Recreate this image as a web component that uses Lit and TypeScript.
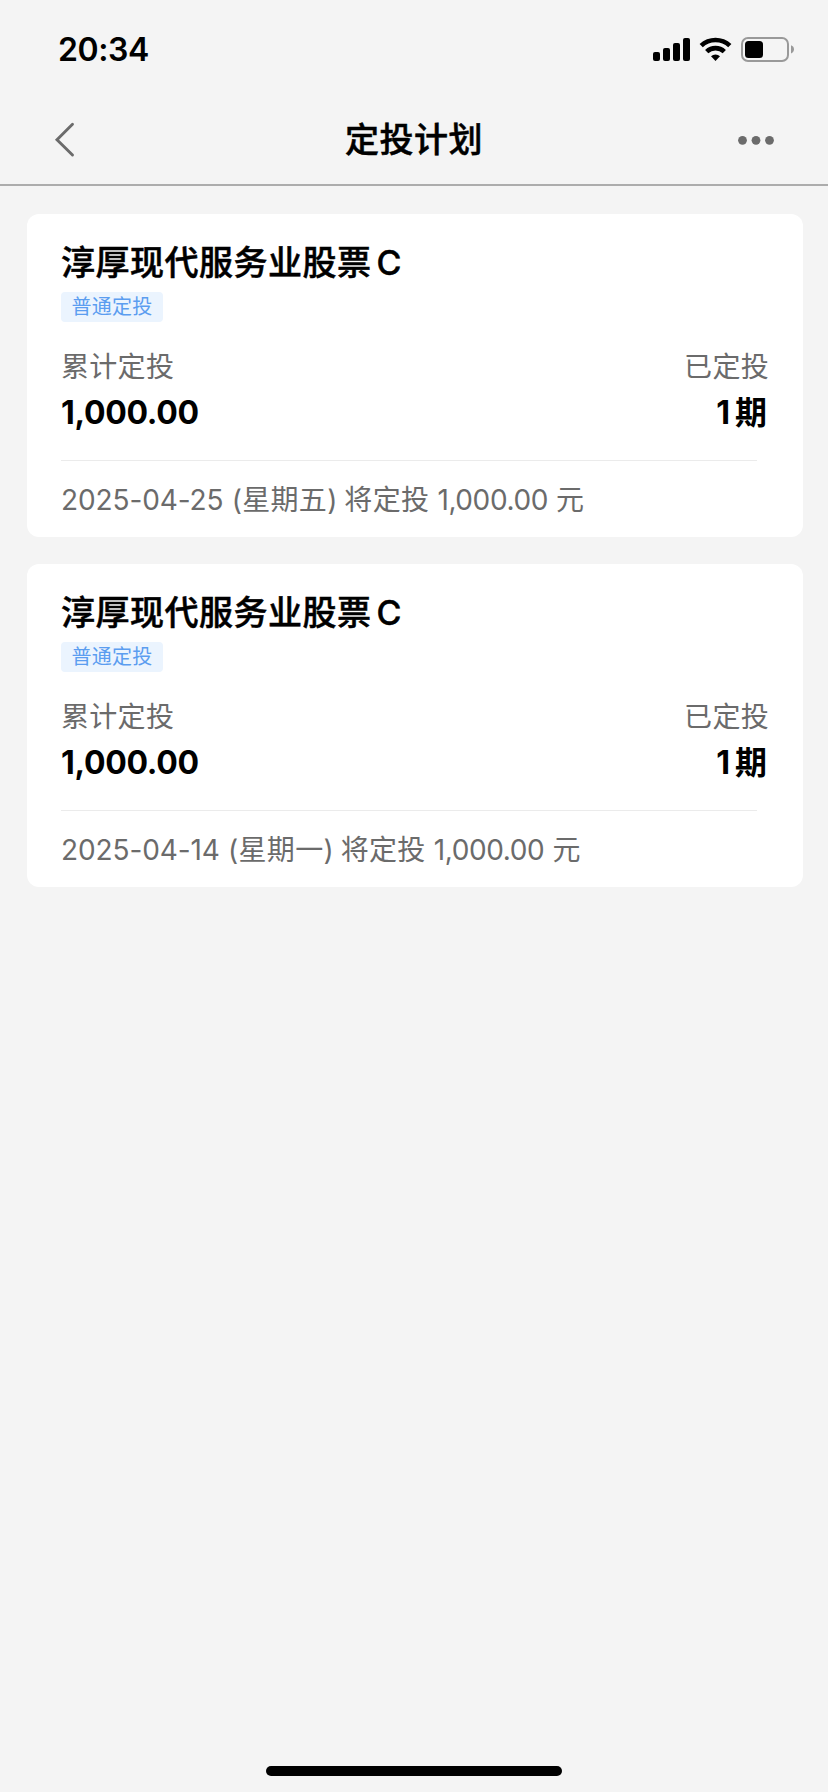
import { LitElement, html, css } from "lit";
import { customElement, property } from "lit/decorators.js";

interface Plan {
  name: string;
  share: string;
  total: string;
  periods: string;
  date: string;
  weekday: string;
  next: string;
}

const plans: Plan[] = [
  { name: "淳厚现代服务业股票", share: "C", total: "1,000.00", periods: "1", date: "2025-04-25", weekday: "星期五", next: "1,000.00" },
  { name: "淳厚现代服务业股票", share: "C", total: "1,000.00", periods: "1", date: "2025-04-14", weekday: "星期一", next: "1,000.00" },
];

@customElement("status-bar")
class StatusBar extends LitElement {
  static styles = css`
    :host { display: flex; justify-content: space-between; align-items: center; height: 100px; padding: 0 34px 0 58px; box-sizing: border-box; }
    .time { font-size: 32px; font-weight: 600; line-height: 40px; letter-spacing: -0.4px; }
    .icons { display: block; }
  `;
  render() {
    return html`
      <span class="time">20:34</span>
      <svg class="icons" width="141" height="26" viewBox="653 37 141 26">
        <rect x="653" y="52" width="7" height="9" rx="2" />
        <rect x="663" y="48" width="7" height="13" rx="2" />
        <rect x="673" y="43" width="7" height="18" rx="2" />
        <rect x="683" y="38" width="7" height="23" rx="2" />
        <path d="M699.6 43.9A23.5 23.5 0 0 1 731.4 43.9L728.2 47.2A18.6 18.6 0 0 0 702.8 47.2Z" />
        <path d="M705.1 49.9A15 15 0 0 1 725.9 49.9L722.7 53.3A10.4 10.4 0 0 0 708.3 53.3Z" />
        <path d="M711 56.2A6.6 6.6 0 0 1 720 56.2L715.5 61Z" />
        <rect x="742" y="38" width="46" height="23" rx="6" fill="none" stroke="#999" stroke-width="2" />
        <rect x="745" y="41" width="18" height="17" rx="3.5" />
        <path d="M791 45.2Q794 46.4 794 49.3T791 53.4Z" fill="#999" />
      </svg>
    `;
  }
}

@customElement("nav-bar")
class NavBar extends LitElement {
  @property() heading = "";
  static styles = css`
    :host { display: grid; grid-template-columns: 1fr auto 1fr; align-items: center; height: 86px; padding: 0 53px 4px; box-sizing: border-box; border-bottom: 2px solid #acacac; }
    .back { display: block; }
    .heading { font-size: 34px; font-weight: 500; line-height: 40px; letter-spacing: 0.5px; -webkit-text-stroke: 0.5px #000; }
    .more { display: block; justify-self: end; }
  `;
  render() {
    return html`
      <svg class="back" width="24" height="36" viewBox="53 122 24 36">
        <path d="M72.5 124.3L57 139.7L72.5 155" fill="none" stroke="#6b6b6b" stroke-width="2.9" stroke-linecap="round" />
      </svg>
      <span class="heading">${this.heading}</span>
      <svg class="more" width="38" height="10" viewBox="737 135 38 10" fill="#6b6b6b">
        <circle cx="742.5" cy="140.3" r="4.4" />
        <circle cx="756" cy="140.3" r="4.4" />
        <circle cx="769.5" cy="140.3" r="4.4" />
      </svg>
    `;
  }
}

@customElement("plan-card")
class PlanCard extends LitElement {
  @property({ attribute: false }) plan!: Plan;
  static styles = css`
    :host { display: block; height: 323px; padding: 29px 34px 0; box-sizing: border-box; background: #fff; border-radius: 12px; }
    .name { display: flex; font-size: 34px; font-weight: 500; line-height: 40px; letter-spacing: 0.5px; gap: 5px; -webkit-text-stroke: 0.5px #000; }
    .tag { display: flex; width: 102px; height: 30px; margin-top: 9px; border-radius: 4px; background: #ebf4fe; color: #5b9df0; font-size: 20px; line-height: 31px; letter-spacing: 0.2px; justify-content: center; }
    .row { display: flex; justify-content: space-between; line-height: 40px; }
    .labels { margin-top: 25px; color: #6b6b6b; font-size: 28px; letter-spacing: 0.3px; }
    .values { margin-top: 6px; font-size: 32px; font-weight: 700; }
    .total { letter-spacing: -0.3px; }
    .count { display: flex; gap: 5px; padding-right: 2px; }
    .rule { height: 1px; margin: 27px 12px 0 0; background: #ebebeb; }
    .next { margin-top: 19px; color: #6b6b6b; font-size: 28px; line-height: 40px; white-space: pre; letter-spacing: 0.3px; }
    .date { letter-spacing: -0.1px; }
    .gap { letter-spacing: -1.2px; }
    .amount { letter-spacing: -0.4px; }
  `;
  render() {
    const p = this.plan;
    return html`
      <div class="name"><span>${p.name}</span><span>${p.share}</span></div>
      <div class="tag">普通定投</div>
      <div class="row labels"><span>累计定投</span><span>已定投</span></div>
      <div class="row values"><span class="total">${p.total}</span><span class="count"><span>${p.periods}</span><span>期</span></span></div>
      <div class="rule"></div>
      <div class="next"><span class="date">${p.date}</span> (${p.weekday})<span class="gap"> </span>将定投 <span class="amount">${p.next}</span> 元</div>
    `;
  }
}

@customElement("app-root")
class AppRoot extends LitElement {
  static styles = css`
    :host { display: flex; flex-direction: column; height: 1792px; background: #f4f4f4; color: #000; font-family: Inter, "Noto Sans CJK SC", sans-serif; }
    .list { display: flex; flex-direction: column; gap: 27px; flex: 1; padding: 28px 25px 0 27px; }
    .home { width: 296px; height: 10px; margin: 0 auto 16px; border-radius: 5px; background: #000; }
  `;
  render() {
    return html`
      <status-bar></status-bar>
      <nav-bar heading="定投计划"></nav-bar>
      <div class="list">${plans.map((p) => html`<plan-card .plan=${p}></plan-card>`)}</div>
      <div class="home"></div>
    `;
  }
}
